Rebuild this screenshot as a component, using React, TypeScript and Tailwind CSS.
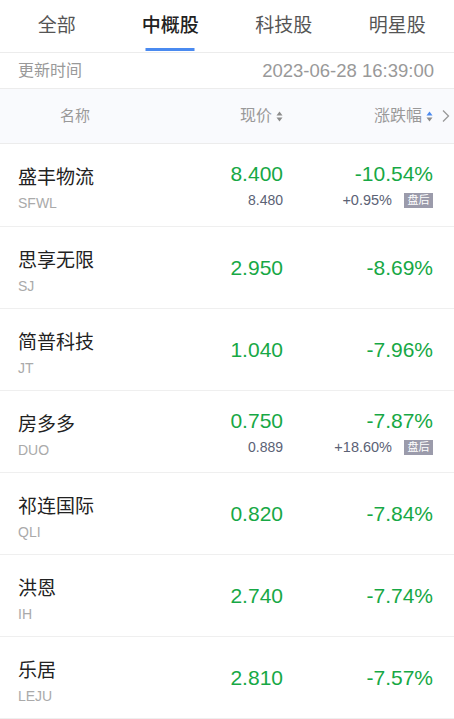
import React from "react";

type Row = {
  name: string;
  code: string;
  price: string;
  pct: string;
  post?: { price: string; pct: string };
};

const rows: Row[] = [
  { name: "盛丰物流", code: "SFWL", price: "8.400", pct: "-10.54%", post: { price: "8.480", pct: "+0.95%" } },
  { name: "思享无限", code: "SJ", price: "2.950", pct: "-8.69%" },
  { name: "简普科技", code: "JT", price: "1.040", pct: "-7.96%" },
  { name: "房多多", code: "DUO", price: "0.750", pct: "-7.87%", post: { price: "0.889", pct: "+18.60%" } },
  { name: "祁连国际", code: "QLI", price: "0.820", pct: "-7.84%" },
  { name: "洪恩", code: "IH", price: "2.740", pct: "-7.74%" },
  { name: "乐居", code: "LEJU", price: "2.810", pct: "-7.57%" },
];

const tabs = ["全部", "中概股", "科技股", "明星股"];

function SortIcon({ active }: { active?: boolean }) {
  return (
    <svg width="7" height="11" viewBox="0 0 7 11" className="ml-[4px]">
      <path d="M3.5 0.5 L6.5 4.5 L0.5 4.5 Z" fill={active ? "#4a8af0" : "#8c8c8c"} />
      <path d="M3.5 10.5 L6.5 6.5 L0.5 6.5 Z" fill="#8c8c8c" />
    </svg>
  );
}

export default function App() {
  return (
    <div
      className="w-[454px] h-[719px] bg-white overflow-hidden"
      style={{ fontFamily: '"Liberation Sans", "Noto Sans CJK SC", sans-serif' }}
    >
      {/* Tabs */}
      <div className="h-[53px] border-b border-[#ececec] grid grid-cols-4">
        {tabs.map((t, i) => (
          <div key={t} className="relative flex items-center justify-center">
            <span
              className={
                i === 1
                  ? "text-[19px] leading-[26px] text-[#222] font-medium -mt-[1px]"
                  : "text-[19px] leading-[26px] text-[#555] -mt-[1px]"
              }
            >
              {t}
            </span>
            {i === 1 && (
              <div className="absolute bottom-[1px] left-1/2 -translate-x-1/2 w-[49px] h-[3px] bg-[#4a8af0]" />
            )}
          </div>
        ))}
      </div>

      {/* Update time */}
      <div className="h-[36px] border-b border-[#ececec] flex items-center justify-between pl-[18px] pr-[20px]">
        <span className="text-[16px] text-[#999]">更新时间</span>
        <span className="text-[18.5px] text-[#999]">2023-06-28 16:39:00</span>
      </div>

      {/* Header */}
      <div className="relative h-[55px] bg-[#f9fafd] border-b border-[#ececec] grid grid-cols-[150px_133px_150px] items-center">
        <div className="text-center text-[15px] text-[#999]">名称</div>
        <div className="flex items-center justify-end text-[16px] text-[#999]">
          现价
          <SortIcon />
        </div>
        <div className="flex items-center justify-end text-[16px] text-[#999]">
          涨跌幅
          <SortIcon active />
        </div>
        <svg
          width="8"
          height="13"
          viewBox="0 0 8 13"
          className="absolute right-[4px] top-1/2 -translate-y-1/2"
        >
          <path d="M1 1 L6.5 6.5 L1 12" stroke="#999" strokeWidth="1.3" fill="none" />
        </svg>
      </div>

      {/* Rows */}
      {rows.map((r, idx) => (
        <div
          key={r.code}
          className={
            (idx === 0 ? "h-[83px]" : "h-[82px]") +
            " border-b border-[#efefef] grid grid-cols-[150px_133px_150px]"
          }
        >
          <div className="pl-[18px] pt-[21px] flex flex-col">
            <span className="text-[19px] leading-[26px] text-[#222]">{r.name}</span>
            <span className="mt-[2px] text-[14px] leading-[20px] text-[#aaa]">{r.code}</span>
          </div>
          {r.post ? (
            <>
              <div className="flex flex-col items-end pt-[16px]">
                <span className="text-[21px] leading-[28px] text-[#17a845]">{r.price}</span>
                <span className="mt-[2px] text-[14px] leading-[20px] text-[#5b6275]">{r.post.price}</span>
              </div>
              <div className="flex flex-col items-end pt-[16px]">
                <span className="text-[21px] leading-[28px] text-[#17a845]">{r.pct}</span>
                <div className="mt-[2px] flex items-center h-[20px]">
                  <span className="text-[14.5px] leading-[20px] text-[#5b6275]">{r.post.pct}</span>
                  <span className="ml-[12px] w-[29px] h-[15px] bg-[#9b9bab] text-white text-[11px] leading-[15px] text-center">
                    盘后
                  </span>
                </div>
              </div>
            </>
          ) : (
            <>
              <div className="flex items-center justify-end">
                <span className="text-[21px] leading-[28px] text-[#17a845]">{r.price}</span>
              </div>
              <div className="flex items-center justify-end">
                <span className="text-[21px] leading-[28px] text-[#17a845]">{r.pct}</span>
              </div>
            </>
          )}
        </div>
      ))}
    </div>
  );
}
